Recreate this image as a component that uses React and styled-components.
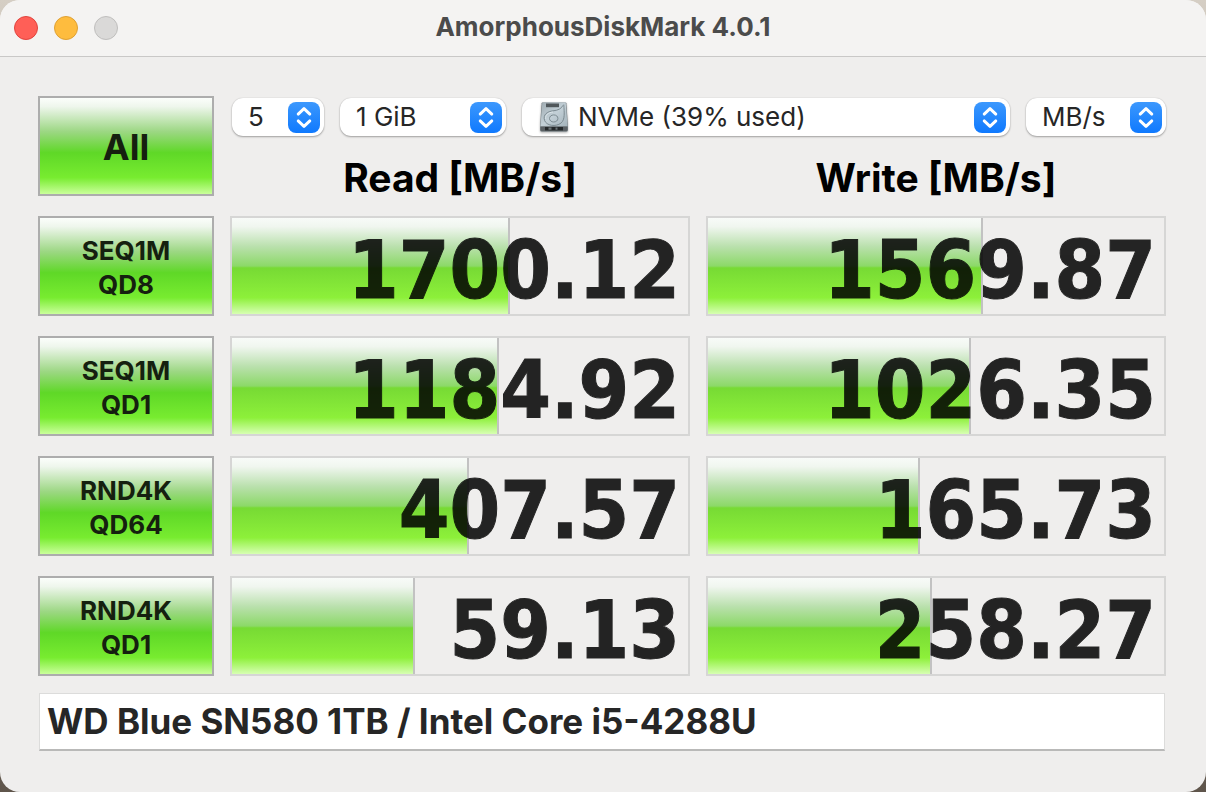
import React, { useState } from "react";
import styled, { createGlobalStyle } from "styled-components";

const TESTS = [
  { id: "seq1m-qd8", lines: ["SEQ1M", "QD8"], read: 1700.12, write: 1569.87 },
  { id: "seq1m-qd1", lines: ["SEQ1M", "QD1"], read: 1184.92, write: 1026.35 },
  { id: "rnd4k-qd64", lines: ["RND4K", "QD64"], read: 407.57, write: 165.73 },
  { id: "rnd4k-qd1", lines: ["RND4K", "QD1"], read: 59.13, write: 258.27 },
];

// bars are on a log scale, 0.1 MB/s is empty and 1,000,000 MB/s is full
const getBarWidth = (value) => `${(Math.log10(value * 10) / 7) * 100}%`;

function Chevrons() {
  return (
    <Arrows viewBox="0 0 32 32" aria-hidden="true">
      <path d="M10 12.5 16 6.800l6 5.700M10 19.500l6 5.700 6-5.700" />
    </Arrows>
  );
}

function DriveIcon() {
  return (
    <Drive viewBox="0 0 30 32" aria-hidden="true">
      <defs>
        <linearGradient id="driveTop" x1="0" y1="0" x2="1" y2="1">
          <stop offset="0" stopColor="#9eaab0" />
          <stop offset="0.5" stopColor="#c3d0d7" />
          <stop offset="1" stopColor="#a3b2ba" />
        </linearGradient>
      </defs>
      <path d="M3.300 1.500h23.400q.6 0 .7.700L29 25v4q0 1.700-1.700 1.700H2.700Q1 30.700 1 29v-4L2.600 2.200q.1-.7.700-.7z" fill="#7b8488" />
      <path d="M3.300 1.500h23.400L28.600 25.500H1.400z" fill="url(#driveTop)" />
      <path d="M1.500 25.500h27v3.300q0 1.300-1.300 1.300H2.800q-1.300 0-1.300-1.300z" fill="#5a6064" />
      <path d="M6 26h18v3.400H6z" fill="#25292b" />
      <path d="M9.500 26.400h3v2.400h-3zM16.500 26.400h2v2.400h-2z" fill="#6b7377" />
      <path d="M7 2.500h13v3.700H7z" fill="#50575a" />
      <path
        d="M24.800 3.500c.4 8 1.500 15-2.800 18.600-5.200 4-14.500 2.800-16.500-2.800C3.800 13.500 8.500 10.500 14 9.800c5-.4 8.300-2 10-5.500M18.900 17.400c0 2.200-1.900 3.600-4.200 3.600s-4.200-1.500-4.200-3.500 1.800-3.600 4.200-3.600c2.500 0 4.200 1.500 4.200 3.500"
        fill="none"
        stroke="#75838a"
        strokeWidth="0.9"
      />
      <path d="M14 11c-5 .5-7.800 3.200-7.400 6.800" fill="none" stroke="#e3ecf0" strokeWidth="0.8" />
    </Drive>
  );
}

function Popup({ label, options, icon, ...rest }) {
  const [value, setValue] = useState(options[0]);
  return (
    <PopupWrap {...rest}>
      {icon}
      <Select
        aria-label={label}
        value={value}
        $hasIcon={Boolean(icon)}
        onChange={(e) => setValue(e.target.value)}
      >
        {options.map((option) => (
          <option key={option}>{option}</option>
        ))}
      </Select>
      <Chevrons />
    </PopupWrap>
  );
}

function Result({ label, value }) {
  return (
    <Gauge aria-label={label}>
      <Bar style={{ width: getBarWidth(value) }} />
      <Value>{value.toFixed(2)}</Value>
    </Gauge>
  );
}

function App() {
  const [note, setNote] = useState("WD Blue SN580 1TB / Intel Core i5-4288U");
  return (
    <>
      <GlobalStyle />
      <Window>
        <TitleBar>
          <Lights>
            <Light $fill="#ff5f57" $edge="#e0443e" aria-label="Close" />
            <Light $fill="#febc3e" $edge="#dea034" aria-label="Minimize" />
            <Light $fill="#dad9d8" $edge="#bfbebd" aria-label="Zoom" disabled />
          </Lights>
          <Title>AmorphousDiskMark 4.0.1</Title>
        </TitleBar>
        <Content>
          <Grid>
            <TestButton $large>All</TestButton>
            <Head>
              <Toolbar>
                <Popup label="Test count" options={["5", "1", "3", "9"]} $width={92} />
                <Popup label="Test size" options={["1 GiB", "2 GiB", "4 GiB"]} $width={166} />
                <Popup label="Drive" options={["NVMe (39% used)"]} icon={<DriveIcon />} />
                <Popup label="Unit" options={["MB/s", "GB/s", "IOPS"]} $width={140} />
              </Toolbar>
              <Headings>
                <Heading>Read [MB/s]</Heading>
                <Heading>Write [MB/s]</Heading>
              </Headings>
            </Head>
            {TESTS.map(({ id, lines, read, write }) => (
              <React.Fragment key={id}>
                <TestButton>
                  {lines.map((line) => (
                    <span key={line}>{line}</span>
                  ))}
                </TestButton>
                <Result label={`${id} read`} value={read} />
                <Result label={`${id} write`} value={write} />
              </React.Fragment>
            ))}
          </Grid>
          <Note aria-label="Note" value={note} onChange={(e) => setNote(e.target.value)} />
        </Content>
      </Window>
    </>
  );
}

const GlobalStyle = createGlobalStyle`
  * {
    box-sizing: border-box;
  }
  body {
    margin: 0;
    background: linear-gradient(#d5cec4, #5f554b);
    font-family: Inter, "Liberation Sans", sans-serif;
    color: #262626;
  }
  button, select, input {
    font-family: inherit;
    color: inherit;
    margin: 0;
  }
`;

const Window = styled.main`
  display: flex;
  flex-direction: column;
  min-height: 100vh;
  background: #efeeed;
  border-radius: 20px;
  overflow: hidden;
`;

const TitleBar = styled.header`
  display: grid;
  grid-template-columns: 1fr auto 1fr;
  align-items: center;
  height: 57px;
  padding: 0 14px;
  background: #f4f3f2;
  border-bottom: 1px solid #c9c8c7;
`;

const Lights = styled.div`
  display: flex;
  gap: 16px;
`;

const Light = styled.button`
  width: 24px;
  height: 24px;
  padding: 0;
  border-radius: 50%;
  border: 1px solid ${({ $edge }) => $edge};
  background: ${({ $fill }) => $fill};
`;

const Title = styled.h1`
  margin: 0;
  padding-bottom: 2px;
  font-size: 26px;
  line-height: 32px;
  font-weight: 700;
  color: #4b4b4b;
`;

const Content = styled.div`
  padding: 39px 40px 40px 38px;
`;

const Grid = styled.div`
  display: grid;
  grid-template-columns: 176px 1fr 1fr;
  grid-auto-rows: 100px;
  gap: 20px 16px;
`;

const Head = styled.div`
  grid-column: span 2;
`;

const Toolbar = styled.div`
  display: flex;
  gap: 16px;
  padding: 2px 0 0 2px;
`;

const PopupWrap = styled.div`
  position: relative;
  display: flex;
  height: 38px;
  flex: ${({ $width }) => ($width ? `0 0 ${$width}px` : "1")};
`;

const Select = styled.select`
  appearance: none;
  width: 100%;
  height: 38px;
  padding: 0 40px 0 ${({ $hasIcon }) => ($hasIcon ? 56 : 16)}px;
  border: 0;
  border-radius: 11px;
  background: #fff;
  box-shadow: 0 1px 2px rgba(0, 0, 0, 0.32), 0 0 1px rgba(0, 0, 0, 0.2);
  font-size: 26px;
  line-height: 36px;
`;

const Arrows = styled.svg`
  position: absolute;
  right: 4px;
  top: 4px;
  width: 32px;
  height: 31px;
  border-radius: 8px;
  background: linear-gradient(#3c98fd, #0f79fe);
  pointer-events: none;
  path {
    fill: none;
    stroke: #fff;
    stroke-width: 3;
    stroke-linecap: round;
    stroke-linejoin: round;
  }
`;

const Drive = styled.svg`
  position: absolute;
  left: 17px;
  top: 3px;
  width: 30px;
  height: 32px;
  pointer-events: none;
  filter: drop-shadow(0 1px 1px rgba(0, 0, 0, 0.3));
`;

const Headings = styled.div`
  display: grid;
  grid-template-columns: 1fr 1fr;
  gap: 16px;
  padding-top: 18px;
`;

const Heading = styled.h2`
  margin: 0;
  font-size: 39px;
  line-height: 48px;
  font-weight: 700;
  text-align: center;
  color: #000;
`;

const TestButton = styled.button`
  display: flex;
  flex-direction: column;
  align-items: center;
  justify-content: center;
  padding: ${({ $large }) => ($large ? 2 : 4)}px 0 0;
  border: 2px solid #adadad;
  background: linear-gradient(
    #fbfefb 0%,
    #eef6ec 9%,
    #9cd783 35%,
    #5fd827 57%,
    #78ec30 83%,
    #caff9b 100%
  );
  font-size: ${({ $large }) => ($large ? 36 : 26)}px;
  line-height: 34px;
  font-weight: 700;
  color: #15200f;
`;

const Gauge = styled.div`
  position: relative;
  display: flex;
  align-items: center;
  justify-content: flex-end;
  border: 2px solid #d6d6d5;
`;

const Bar = styled.div`
  position: absolute;
  left: 0;
  top: 0;
  bottom: 0;
  box-sizing: content-box;
  border-right: 2px solid #c2c2c2;
  background: linear-gradient(
    #f8fbf8 0%,
    #f0f6ef 9%,
    #b9e0ac 30%,
    #8cd968 50%,
    #77da34 52%,
    #8df03a 83%,
    #d7ffb3 100%
  );
`;

const Value = styled.span`
  position: relative;
  padding: 8px 8px 0 0;
  font-family: "DejaVu Sans Condensed", "DejaVu Sans", sans-serif;
  font-size: 81px;
  line-height: 90px;
  font-weight: 700;
  color: #000;
  -webkit-text-stroke: 1px #000;
  opacity: 0.85;
`;

const Note = styled.input`
  display: block;
  width: calc(100% - 2px);
  height: 58px;
  margin: 17px 0 0 1px;
  padding: 0 7px 2px;
  border: 1px solid #dcdcdb;
  border-bottom: 2px solid #b9b9b8;
  border-radius: 0;
  background: #fff;
  font-size: 35px;
  font-weight: 700;
  outline: none;
`;

export default App;
